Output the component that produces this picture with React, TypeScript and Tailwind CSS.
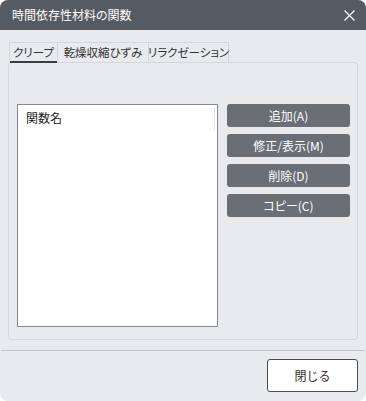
import React from "react";

const font = { fontFamily: '"Noto Sans CJK JP", "Noto Sans", sans-serif' };

const TABS = ["クリープ", "乾燥収縮ひずみ", "リラクゼーション"];
const ACTIONS = ["追加(A)", "修正/表示(M)", "削除(D)", "コピー(C)"];

export default function App() {
  return (
    <div className="w-[366px] h-[401px] bg-white" style={font}>
      <div className="h-full flex flex-col rounded-[8px] overflow-hidden bg-[#e9eaed]">
        {/* title bar */}
        <div className="h-[30px] shrink-0 bg-[#555b63] flex items-center justify-between pl-[12px] pr-[11px]">
          <span className="text-[12px] text-white [font-feature-settings:'palt']">時間依存性材料の関数</span>
          <svg width="11" height="11" viewBox="0 0 11 11">
            <path d="M0.5 0.5 L10.5 10.5 M10.5 0.5 L0.5 10.5" stroke="#fff" strokeWidth="1.2" />
          </svg>
        </div>

        {/* tabs */}
        <div className="flex px-[9px] pt-[12px] h-[32px] shrink-0">
          {TABS.map((t, i) => (
            <div
              key={t}
              className={
                "relative h-[20px] flex items-center justify-center whitespace-nowrap border-t border-r border-[#d4d6da] text-[11.5px] text-[#333] [font-feature-settings:'palt'] " +
                (i === 0 ? "border-l w-[49px]" : i === 1 ? "w-[91px]" : "w-[80px]")
              }
            >
              {t}
              {i === 0 && <span className="absolute left-0 right-0 bottom-[-1px] h-[2px] bg-[#3a3d42]" />}
            </div>
          ))}
        </div>

        {/* panel */}
        <div className="mx-[8px] h-[278px] border border-[#d4d6da] rounded-[4px] pt-[41px] pl-[8px] pr-[7px] flex gap-[9px]">
          <div className="w-[201px] h-[223px] bg-white border border-[#87898d] relative">
            <div className="pl-[8px] pt-[4px] text-[12px] text-[#222]">関数名</div>
            <span className="absolute left-[196px] top-[3px] w-px h-[23px] bg-[#e2e2e2]" />
          </div>
          <div className="flex flex-col gap-[7px]">
            {ACTIONS.map((a) => (
              <button
                key={a}
                className="w-[123px] h-[23px] rounded-[3px] bg-[#6a6e75] text-white text-[12px] flex items-center justify-center [font-feature-settings:'palt']"
              >
                {a}
              </button>
            ))}
          </div>
        </div>

        {/* separator + footer */}
        <div className="mt-[10px] mx-[1px] h-px bg-[#c3c7ca]" />
        <div className="flex justify-end pr-[8px] pt-[8px]">
          <button className="w-[91px] h-[33px] bg-white border border-[#4a4c50] rounded-[3px] text-[12px] text-[#333]">
            閉じる
          </button>
        </div>
      </div>
    </div>
  );
}
